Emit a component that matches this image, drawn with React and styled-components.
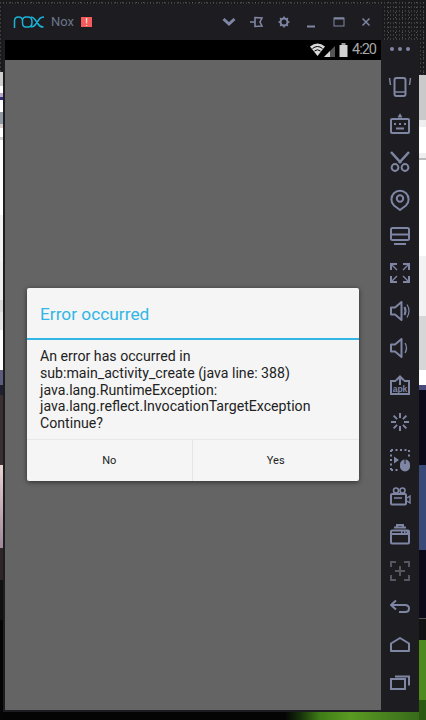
import styled, { createGlobalStyle } from "styled-components"

const GlobalStyle = createGlobalStyle`
    html, body {
        margin: 0;
        padding: 0;
        background: #000;
    }
`

const leftStrip = `linear-gradient(to bottom,
    transparent 0 72px, #cdcdcd 72px 86px, #fff 86px 93px, #b9a9c8 93px 97px, #30307a 97px 100px, #fff 100px 112px,
    #8f9aa0 112px 124px, #d8d0c8 124px 128px, #fff 128px 137px, #cfcfcf 137px 140px, #fff 140px 215px,
    #f2f2f2 215px 262px, #eee 262px 300px, #d9d9d9 300px 312px, #e6e6e6 312px 330px, #fff 330px 370px,
    #5c5c7c 370px 385px, #1e2030 385px 395px, #3a3030 395px 465px, #e8d2d2 465px, #a08898 548px,
    #2e2626 548px 580px, #111 580px 620px, #050505 620px 720px)`

const rightStrip = `linear-gradient(to bottom,
    transparent 0 75px, #c9c9c9 75px 120px, #eee 120px 127px, #fff 127px 153px, #eee 153px 158px, #bbb 158px 160px,
    #fff 160px 256px, #f2f2f2 256px 316px, #d6d6d6 316px 370px, #fff 370px 385px, #4a4a78 385px 390px,
    #0a0a18 390px 465px, #3a4a78 465px 550px, #0a0a18 550px 618px, #555 618px 619px, #111 619px 640px,
    #4f8a1e 640px 700px, #2a5a10 700px 720px)`

const bottomStrip = `linear-gradient(to right, #040404 0 285px, #16300a 300px, #3f7d16 320px, #5a9a22 350px, #34661a 426px)`

const Desktop = styled.div`
    box-sizing: border-box;
    width: 426px;
    height: 720px;
    overflow: hidden;
    padding: 4px 7px 8px 3px;
    background:
        ${leftStrip} left top / 3px 100% no-repeat,
        ${rightStrip} right top / 7px 100% no-repeat,
        ${bottomStrip} left bottom / 100% 8px no-repeat,
        radial-gradient(circle, #5a5a5a 0 0.6px, transparent 1px) 0 0 / 7px 5px,
        radial-gradient(circle, #3c3c3c 0 0.6px, transparent 1px) 2px 1px / 3px 4px,
        #1a1a1c;
`

const Win = styled.div`
    display: flex;
    flex-direction: column;
    width: 416px;
    height: 708px;
    color: #7f86a3;
`

const TitleBar = styled.div`
    display: flex;
    align-items: center;
    box-sizing: border-box;
    width: 379px;
    height: 36px;
    flex: none;
    padding: 0 6px 0 10px;
    background: #1c1c21;
`

const Logo = styled.svg`
    width: 32px;
    height: 14px;
    flex: none;
    color: #1cb2d6;
`

const AppName = styled.span`
    margin-left: 6px;
    color: #6c7689;
    font-family: Roboto, sans-serif;
    font-size: 13px;
    line-height: 36px;
`

const Badge = styled.span`
    display: flex;
    align-items: center;
    justify-content: center;
    width: 11px;
    height: 10px;
    margin-left: 7px;
    background: #f45b5b;
    color: #fff;
    font-family: "Liberation Sans", sans-serif;
    font-size: 10px;
    font-weight: 400;
`

const Controls = styled.div`
    display: flex;
    align-items: center;
    margin-left: auto;
    gap: 7.5px;
`

const Icon = styled.svg`
    display: block;
    width: ${props => props.$size || 28}px;
    height: ${props => props.$size || 28}px;
    flex: none;
    fill: none;
    stroke: currentColor;
    stroke-width: 2;
    color: ${props => props.$dim ? "#55565f" : "#7f86a3"};
`

const Body = styled.div`
    display: flex;
    flex: 1;
    background: #1c1c21;
`

const Screen = styled.div`
    display: flex;
    flex-direction: column;
    width: 376px;
    margin: 0 0 2px 2px;
    background: #646464;
`

const StatusBar = styled.div`
    display: flex;
    align-items: center;
    justify-content: flex-end;
    height: 20px;
    flex: none;
    padding-right: 5px;
    background: #000;
`

const StatusIcons = styled.svg`
    width: 40px;
    height: 16px;
    margin-right: 2px;
`

const Clock = styled.span`
    color: #a8a8a8;
    font-family: Roboto, sans-serif;
    font-size: 14.5px;
    letter-spacing: -1px;
    line-height: 20px;
`

const Scrim = styled.div`
    display: flex;
    flex: 1;
    padding: 228px 22px 0;
`

const Dialog = styled.div`
    display: flex;
    flex-direction: column;
    width: 332px;
    height: 193px;
    border-radius: 2px;
    background: #f5f5f5;
    box-shadow: 0 1px 5px rgba(0, 0, 0, 0.55);
`

const DialogTitle = styled.div`
    box-sizing: border-box;
    height: 52px;
    flex: none;
    padding: 2px 0 0 13px;
    border-bottom: 2px solid #33b5e5;
    color: #33b5e5;
    font-family: Roboto, sans-serif;
    font-size: 17.3px;
    line-height: 48px;
`

const Message = styled.div`
    flex: 1;
    padding: 8px 0 0 13px;
    color: #222;
    font-family: Roboto, sans-serif;
    font-size: 14.15px;
    line-height: 16.8px;
    white-space: pre;
`

const Actions = styled.div`
    display: flex;
    box-sizing: border-box;
    height: 42px;
    flex: none;
    border-top: 1px solid #e8e8e8;
`

const ActionButton = styled.div`
    display: flex;
    flex: ${props => props.$grow} 1 0;
    align-items: center;
    justify-content: center;
    color: #222;
    font-family: Roboto, sans-serif;
    font-size: 11px;

    & + & {
        border-left: 1px solid #e4e4e4;
    }
`

const Sidebar = styled.div`
    display: flex;
    flex-direction: column;
    width: 38px;
    flex: none;
`

const MoreDots = styled.div`
    display: flex;
    align-items: center;
    justify-content: center;
    gap: 4px;
    height: 18px;
    margin-bottom: 10.4px;
`

const Dot = styled.span`
    width: 4px;
    height: 4px;
    border-radius: 50%;
    background: #7f86a3;
`

const Slot = styled.div`
    display: flex;
    align-items: center;
    justify-content: center;
    height: 37.25px;
    flex: none;
`

const tools = [
    // phone shake
    <><rect x="8.5" y="5" width="11" height="18" rx="2"/><path d="M3.5 5l1 7M24.5 5l-1 7M8.5 19h11" strokeWidth="1.5"/></>,
    // keyboard
    <><rect x="5" y="9" width="18" height="14" rx="1"/><path d="M12.500 7.500l1.500-2.500 1.500 2.500M8 14h2M13 14h2M18 14h2M10 18.500h8" strokeWidth="1.800"/></>,
    // scissors
    <><path d="M5 4l10 11M23 4L13 15" strokeWidth="2.6"/><circle cx="9" cy="19.5" r="3.4"/><circle cx="19" cy="19.5" r="3.4"/></>,
    // location pin
    <><path d="M14 25l-6-4.5a8.6 8.6 0 1 1 12 0z" strokeLinejoin="round"/><circle cx="14" cy="13.5" r="3.2"/></>,
    // monitor
    <><rect x="5" y="6" width="18" height="12" rx="1.500"/><path d="M5 12.500h18M8 22h12"/></>,
    // fullscreen
    <><path d="M11 5H5v6M17 5h6v6M11 23H5v-6M17 23h6v-6"/><path d="M6 6l5 5M22 6l-5 5M6 22l5-5M22 22l-5-5" strokeWidth="1.4"/></>,
    // volume up
    <><path d="M5 10.5h4L15.5 5v18L9 17.5H5z" strokeLinejoin="round"/><path d="M18.5 10q2 4 0 8"/><path d="M21 7.5q4 6.500 0 13" strokeWidth="1.2"/></>,
    // volume down
    <><path d="M5 10.5h4L15.5 5v18L9 17.5H5z" strokeLinejoin="round"/><path d="M19 9q3 5 0 10" strokeWidth="1.4"/></>,
    // apk install
    <><path d="M10 10H5v13h18V10h-5"/><path d="M14 14V5.500M10 9.500l4-4 4 4"/><text x="14" y="21" textAnchor="middle" fontFamily="Liberation Sans, sans-serif" fontSize="8.500" fontWeight="700" fill="currentColor" stroke="none">apk</text></>,
    // shake spinner
    <path d="M14 5v5M14 18v5M5 14h5M18 14h5M7.600 7.600l3.500 3.500M20.400 7.600l-3.500 3.500M7.600 20.400l3.500-3.500M20.400 20.400l-3.500-3.500"/>,
    // mouse select
    <><path d="M5 4h18M5 4v20M23 4v7M5 24h7" strokeDasharray="2 2.500"/><path d="M8 10.500l5 3.500-5 3.500z" fill="currentColor" stroke="none"/><path d="M14 18.500a5 5 0 0 1 10 0v2a5 5 0 0 1-10 0z" fill="currentColor" stroke="none"/><path d="M19 13v5" stroke="#1c1c21" strokeWidth="1"/></>,
    // video camera
    <><circle cx="10" cy="7.500" r="2.500" strokeWidth="1.600"/><circle cx="16.500" cy="7.500" r="2.500" strokeWidth="1.600"/><rect x="5" y="11" width="15" height="10.500" rx="1"/><path d="M8 15h8" strokeWidth="1.500"/><path d="M21 15l3-2v7l-3-2" strokeWidth="1.400"/></>,
    // toolbox
    <><path d="M11 7V5h6v2M8 7.500h12"/><rect x="5" y="10.500" width="18" height="13" rx="1"/><path d="M5 14h18"/><path d="M15 12h1.500M18 12h1.500M20.500 12H22" stroke="#7f86a3"/></>,
]

const navTools = [
    <><path d="M10 5.500l-5 4.500 5 4.500" strokeLinejoin="round"/><path d="M5 10h14q4 0 4 3.500T19 17h-6"/></>,
    <path d="M5 19v-7.500L14 6l9 5.500V19z" strokeLinejoin="round"/>,
    <><rect x="5" y="10" width="14" height="10"/><path d="M9 7.500h14v9"/></>,
]

export default function App() {
    return (
        <>
            <GlobalStyle/>
            <Desktop>
                <Win>
                    <TitleBar>
                        <Logo viewBox="0 0 32 14" fill="none" stroke="currentColor" strokeWidth="1.5">
                            <path d="M1.500 13V6q0-4 4-4t4 4v2q0 4 3.500 4h2q4 0 4-5t-4-5h-2q-3 0-3.500 3"/>
                            <path d="M18 2q2 0 4 2.500l3.500 5q1.500 2.500 5 2.500M31 2q-3.500 0-5 2.500l-3.500 5Q21 12 18 12"/>
                        </Logo>
                        <AppName>Nox</AppName>
                        <Badge>!</Badge>
                        <Controls>
                            <Icon viewBox="0 0 20 20" $size={20}>
                                <path d="M4.500 7l5.500 5 5.500-5" strokeWidth="3"/>
                            </Icon>
                            <Icon viewBox="0 0 20 20" $size={20}>
                                <path d="M4 10h5M9 5.500l7 .500-2 4 2 4-7 .500z" strokeWidth="1.600"/>
                            </Icon>
                            <Icon viewBox="0 0 20 20" $size={20}>
                                <circle cx="10" cy="10" r="3.500" strokeWidth="2"/>
                                <path d="M10 4.500v2M10 13.500v2M4.500 10h2M13.500 10h2M6.100 6.100l1.400 1.400M13.900 6.100l-1.400 1.400M6.100 13.900l1.400-1.400M13.900 13.900l-1.400-1.400" strokeWidth="1.600"/>
                            </Icon>
                            <Icon viewBox="0 0 20 20" $size={20}>
                                <path d="M6 14.500h8" strokeWidth="2"/>
                            </Icon>
                            <Icon viewBox="0 0 20 20" $size={20}>
                                <rect x="5" y="6" width="10" height="8" strokeWidth="1"/>
                                <path d="M5 6.500h10" strokeWidth="2"/>
                            </Icon>
                            <Icon viewBox="0 0 20 20" $size={20}>
                                <path d="M6.500 6.500l7 7M13.500 6.500l-7 7" strokeWidth="1.500"/>
                            </Icon>
                        </Controls>
                    </TitleBar>
                    <Body>
                        <Screen>
                            <StatusBar>
                                <StatusIcons viewBox="0 0 40 16">
                                    <path d="M0 4.500Q7.500-1.500 15 4.500L7.500 14z" fill="#d8d8d8"/>
                                    <path d="M2.500 6.500Q7.500 2.500 12.500 6.500M4.500 9Q7.500 6.500 10.500 9" stroke="#000" fill="none"/>
                                    <path d="M14 15L25 4v11z" fill="#555"/>
                                    <path d="M14 15l6-6v6z" fill="#d8d8d8"/>
                                    <rect x="29.500" y="3" width="8" height="12" fill="#d0d0d0"/>
                                    <rect x="31.500" y="1" width="4" height="2" fill="#999"/>
                                </StatusIcons>
                                <Clock>4:20</Clock>
                            </StatusBar>
                            <Scrim>
                                <Dialog>
                                    <DialogTitle>Error occurred</DialogTitle>
                                    <Message>{"An error has occurred in\nsub:main_activity_create (java line: 388)\njava.lang.RuntimeException:\njava.lang.reflect.InvocationTargetException\nContinue?"}</Message>
                                    <Actions>
                                        <ActionButton $grow={165}>No</ActionButton>
                                        <ActionButton $grow={167}>Yes</ActionButton>
                                    </Actions>
                                </Dialog>
                            </Scrim>
                        </Screen>
                        <Sidebar>
                            <MoreDots><Dot/><Dot/><Dot/></MoreDots>
                            {tools.map((shape, i) => (
                                <Slot key={i}><Icon viewBox="0 0 28 28">{shape}</Icon></Slot>
                            ))}
                            <Slot>
                                <Icon viewBox="0 0 28 28" $dim>
                                    <path d="M5 10V5h5M18 5h5v5M5 18v5h5M18 23h5v-5M14 9v10M9 14h10"/>
                                </Icon>
                            </Slot>
                            {navTools.map((shape, i) => (
                                <Slot key={i}><Icon viewBox="0 0 28 28">{shape}</Icon></Slot>
                            ))}
                        </Sidebar>
                    </Body>
                </Win>
            </Desktop>
        </>
    )
}
